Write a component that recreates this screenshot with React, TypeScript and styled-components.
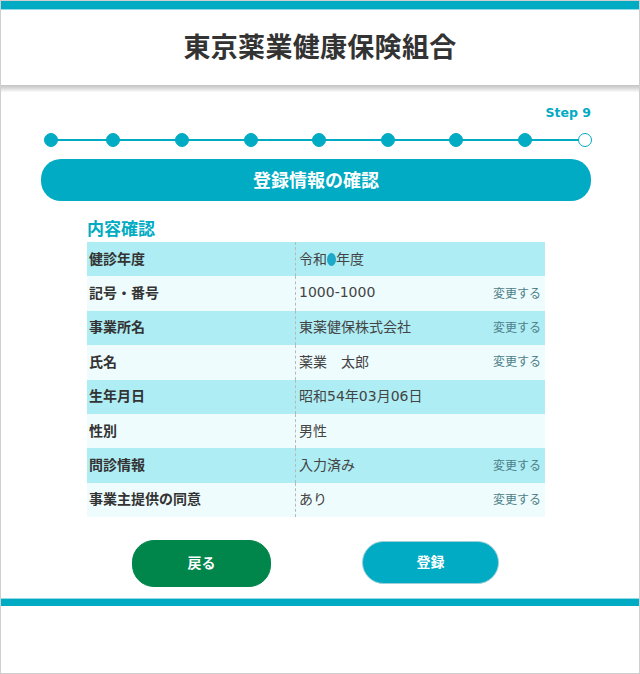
import React from "react";
import styled, { createGlobalStyle } from "styled-components";

const TEAL = "#00abc3";
const JP = `"DejaVu Sans", "Noto Sans CJK JP", sans-serif`;
const JP_ONLY = `"Noto Sans CJK JP", "Noto Sans", sans-serif`;

const Global = createGlobalStyle`
  html, body { margin: 0; padding: 0; background: #fff; }
  body { font-family: ${JP}; color: #333; }
  * { box-sizing: border-box; }
`;

const Frame = styled.div`
  width: 640px;
  height: 674px;
  border: 1px solid #cfcfcf;
  display: flex;
  flex-direction: column;
  overflow: hidden;
`;

const TopBar = styled.div`
  height: 9px;
  background: ${TEAL};
  border-bottom: 1px solid #8fdbe6;
  flex: none;
`;

const Header = styled.header`
  height: 75px;
  display: flex;
  align-items: center;
  justify-content: center;
  padding-bottom: 4px;
  flex: none;
`;

const Title = styled.h1`
  margin: 0;
  font-family: ${JP_ONLY};
  font-size: 27px;
  font-weight: 700;
  color: #333;
  letter-spacing: 0.3px;
`;

const HeaderShadow = styled.div`
  height: 7px;
  flex: none;
  background: linear-gradient(#c4c4c4, #d6d6d6 40%, #fafafa);
`;

const Main = styled.main`
  padding: 0 48px 0 40px;
  display: flex;
  flex-direction: column;
`;

const StepLabel = styled.div`
  margin-top: 13px;
  text-align: right;
  font-family: "DejaVu Sans", "Noto Sans", sans-serif;
  font-weight: 700;
  font-size: 12.5px;
  line-height: 16px;
  color: ${TEAL};
`;

const Steps = styled.div`
  margin-top: 12px;
  margin-left: 3px;
  height: 14px;
  position: relative;
  display: flex;
  align-items: center;
`;

const StepLine = styled.div`
  position: absolute;
  left: 6px;
  right: 6px;
  top: 6px;
  height: 2px;
  background: ${TEAL};
`;

const Dot = styled.span<{ $hollow?: boolean; $gap: number }>`
  position: relative;
  flex: none;
  width: 14px;
  height: 14px;
  margin-left: ${(p) => p.$gap}px;
  border-radius: 50%;
  background: ${(p) => (p.$hollow ? "#fff" : TEAL)};
  border: 1.5px solid ${TEAL};
`;

const Banner = styled.div`
  margin-top: 12px;
  height: 42px;
  border-radius: 20px;
  background: ${TEAL};
  color: #fff;
  font-family: ${JP_ONLY};
  font-size: 18px;
  font-weight: 700;
  display: flex;
  align-items: center;
  justify-content: center;
  padding-bottom: 2px;
`;

const Section = styled.section`
  padding-left: 46px;
  padding-right: 46px;
  margin-top: 15px;
`;

const SectionTitle = styled.h2`
  margin: 0 0 2px;
  font-family: ${JP_ONLY};
  font-size: 17px;
  line-height: 24px;
  font-weight: 700;
  color: ${TEAL};
`;

const Table = styled.div`
  display: grid;
  grid-template-columns: 208px 1fr;
  grid-auto-rows: 34.4px;
  width: 458px;
`;

const Label = styled.div<{ $alt: boolean }>`
  background: ${(p) => (p.$alt ? "#effcfd" : "#aeedf4")};
  font-family: ${JP_ONLY};
  font-size: 14px;
  font-weight: 700;
  color: #333;
  display: flex;
  align-items: center;
  padding: 0 0 3px 2px;
`;

const Value = styled.div<{ $alt: boolean }>`
  background: ${(p) => (p.$alt ? "#effcfd" : "#aeedf4")};
  border-left: 1px dashed #b9b9b9;
  font-size: 14px;
  color: #444;
  display: flex;
  align-items: center;
  justify-content: space-between;
  padding: 0 4px 3px 3px;
`;

const Change = styled.span`
  font-family: ${JP_ONLY};
  font-size: 12px;
  color: #4d8088;
`;

const Mask = styled.span`
  display: inline-block;
  width: 9px;
  height: 13px;
  border-radius: 50%;
  background: #1ea9c9;
  vertical-align: -2px;
`;

const ButtonRow = styled.div`
  margin-top: 23px;
  padding-left: 131px;
  display: flex;
  align-items: center;
  gap: 91px;
  height: 47px;
`;

const Btn = styled.button<{ $variant: "back" | "submit" }>`
  font-family: ${JP_ONLY};
  font-weight: 700;
  font-size: 14px;
  color: #fff;
  border-radius: 22px;
  cursor: pointer;
  padding: 0 0 3px;
  width: ${(p) => (p.$variant === "back" ? "139px" : "137px")};
  height: ${(p) => (p.$variant === "back" ? "47px" : "43px")};
  background: ${(p) => (p.$variant === "back" ? "#00864a" : TEAL)};
  border: 1px solid ${(p) => (p.$variant === "back" ? "#00864a" : "#9fcfd6")};
  margin-top: ${(p) => (p.$variant === "back" ? "0" : "-2px")};
`;

const BottomBar = styled.div`
  margin-top: 11px;
  height: 8px;
  background: ${TEAL};
  border-top: 1px solid #8fdbe6;
  flex: none;
`;

type Row = { label: string; value: React.ReactNode; change?: boolean };

const rows: Row[] = [
  { label: "健診年度", value: <>令和<Mask />年度</> },
  { label: "記号・番号", value: "1000-1000", change: true },
  { label: "事業所名", value: "東薬健保株式会社", change: true },
  { label: "氏名", value: "薬業　太郎", change: true },
  { label: "生年月日", value: "昭和54年03月06日" },
  { label: "性別", value: "男性" },
  { label: "問診情報", value: "入力済み", change: true },
  { label: "事業主提供の同意", value: "あり", change: true },
];

// spacing between step dot centers, as in the reference
const stepCenters = [50, 112, 181, 249.5, 318, 386.5, 455, 524, 584];

export default function App() {
  return (
    <>
      <Global />
      <Frame>
        <TopBar />
        <Header>
          <Title>東京薬業健康保険組合</Title>
        </Header>
        <HeaderShadow />
        <Main>
          <StepLabel>Step 9</StepLabel>
          <Steps>
            <StepLine />
            {stepCenters.map((c, i) => (
              <Dot
                key={i}
                $hollow={i === stepCenters.length - 1}
                $gap={i === 0 ? 0 : c - stepCenters[i - 1] - 14}
              />
            ))}
          </Steps>
          <Banner>登録情報の確認</Banner>
          <Section>
            <SectionTitle>内容確認</SectionTitle>
            <Table>
              {rows.map((r, i) => (
                <React.Fragment key={r.label}>
                  <Label $alt={i % 2 === 1}>{r.label}</Label>
                  <Value $alt={i % 2 === 1}>
                    <span>{r.value}</span>
                    {r.change && <Change>変更する</Change>}
                  </Value>
                </React.Fragment>
              ))}
            </Table>
          </Section>
        </Main>
        <ButtonRow>
          <Btn $variant="back">戻る</Btn>
          <Btn $variant="submit">登録</Btn>
        </ButtonRow>
        <BottomBar />
      </Frame>
    </>
  );
}
